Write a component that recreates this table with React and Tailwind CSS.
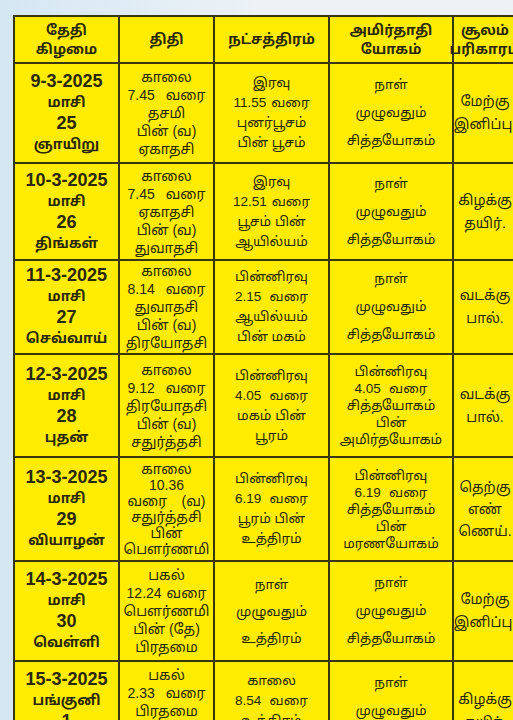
const rows = [
  {
    h: 100,
    date: ['9-3-2025', 'மாசி', '25', 'ஞாயிறு'],
    thithi: ['காலை', '7.45 வரை', 'தசமி', 'பின் (வ)', 'ஏகாதசி'],
    star: ['இரவு', '11.55 வரை', 'புனர்பூசம்', 'பின் பூசம்'],
    yogam: ['நாள்', 'முழுவதும்', 'சித்தயோகம்'],
    soolam: ['மேற்கு', 'இனிப்பு.'],
  },
  {
    h: 97,
    date: ['10-3-2025', 'மாசி', '26', 'திங்கள்'],
    thithi: ['காலை', '7.45 வரை', 'ஏகாதசி', 'பின் (வ)', 'துவாதசி'],
    star: ['இரவு', '12.51 வரை', 'பூசம் பின்', 'ஆயில்யம்'],
    yogam: ['நாள்', 'முழுவதும்', 'சித்தயோகம்'],
    soolam: ['கிழக்கு', 'தயிர்.'],
  },
  {
    h: 94,
    date: ['11-3-2025', 'மாசி', '27', 'செவ்வாய்'],
    thithi: ['காலை', '8.14 வரை', 'துவாதசி', 'பின் (வ)', 'திரயோதசி'],
    star: ['பின்னிரவு', '2.15 வரை', 'ஆயில்யம்', 'பின் மகம்'],
    yogam: ['நாள்', 'முழுவதும்', 'சித்தயோகம்'],
    soolam: ['வடக்கு', 'பால்.'],
  },
  {
    h: 103,
    date: ['12-3-2025', 'மாசி', '28', 'புதன்'],
    thithi: ['காலை', '9.12 வரை', 'திரயோதசி', 'பின் (வ)', 'சதுர்த்தசி'],
    star: ['பின்னிரவு', '4.05 வரை', 'மகம் பின்', 'பூரம்'],
    yogam: ['பின்னிரவு', '4.05 வரை', 'சித்தயோகம்', 'பின்', 'அமிர்தயோகம்'],
    soolam: ['வடக்கு', 'பால்.'],
  },
  {
    h: 104,
    date: ['13-3-2025', 'மாசி', '29', 'வியாழன்'],
    thithi: ['காலை', '10.36', 'வரை (வ)', 'சதுர்த்தசி', 'பின்', 'பௌர்ணமி'],
    star: ['பின்னிரவு', '6.19 வரை', 'பூரம் பின்', 'உத்திரம்'],
    yogam: ['பின்னிரவு', '6.19 வரை', 'சித்தயோகம்', 'பின்', 'மரணயோகம்'],
    soolam: ['தெற்கு', 'எண்', 'ணெய்.'],
  },
  {
    h: 100,
    date: ['14-3-2025', 'மாசி', '30', 'வெள்ளி'],
    thithi: ['பகல்', '12.24 வரை', 'பௌர்ணமி', 'பின் (தே)', 'பிரதமை'],
    star: ['நாள்', 'முழுவதும்', 'உத்திரம்'],
    yogam: ['நாள்', 'முழுவதும்', 'சித்தயோகம்'],
    soolam: ['மேற்கு', 'இனிப்பு.'],
  },
  {
    h: 100,
    date: ['15-3-2025', 'பங்குனி', '1', 'சனி'],
    thithi: ['பகல்', '2.33 வரை', 'பிரதமை', 'பின் (வ)', 'துவிதியை'],
    star: ['காலை', '8.54 வரை', 'உத்திரம்', 'பின் அஸ்தம்'],
    yogam: ['நாள்', 'முழுவதும்', 'சித்தயோகம்'],
    soolam: ['கிழக்கு', 'தயிர்.'],
  },
];

const font = { fontFamily: '"Liberation Sans", "Noto Sans", "Noto Sans Tamil", sans-serif' };
const cols = 'grid grid-cols-[105px_95px_115px_124px_64px]';

// spread = min width for lines that are justified across the cell (the "X வரை" lines)
function Cell({ lines, className = '', spread = null, lineClass = null }) {
  return (
    <div
      className={`flex flex-col items-center justify-center border-r-2 border-b-2 border-[#3b3612] text-center whitespace-nowrap ${className}`}
    >
      {lines.map((l, i) => {
        const extra = lineClass ? lineClass(l, i) : '';
        if (spread && l.includes('வரை') && l.includes(' ')) {
          const cut = l.indexOf(' ');
          return (
            <span key={i} className={`flex justify-between gap-x-[5px] ${spread} ${extra}`}>
              <span>{l.slice(0, cut)}</span>
              <span>{l.slice(cut + 1)}</span>
            </span>
          );
        }
        return (
          <span key={i} className={extra}>
            {l}
          </span>
        );
      })}
    </div>
  );
}

export default function App() {
  return (
    <div
      className="w-[513px] h-[720px] overflow-hidden bg-gradient-to-r from-[#d5e7f4] via-[#ecf2f6] to-[#edf2f5] pt-[15px] pl-[13px]"
      style={font}
    >
      <div className="w-[520px] border-l-2 border-t-2 border-[#3b3612] bg-[#ffec00] text-[#2c2806]">
        <div className={`${cols} h-[47px] text-[14px] leading-[19px] font-bold`}>
          <Cell lines={['தேதி', 'கிழமை']} />
          <Cell lines={['திதி']} />
          <Cell lines={['நட்சத்திரம்']} />
          <Cell lines={['அமிர்தாதி', 'யோகம்']} />
          <Cell lines={['சூலம்', 'பரிகாரம்']} />
        </div>
        {rows.map((r, i) => (
          <div key={i} className={cols} style={{ height: r.h }}>
            <Cell
              lines={r.date}
              className="font-bold leading-[21px] text-[14px]"
              lineClass={(l, j) => (j === 0 || j === 2 ? 'text-[18px]' : '')}
            />
            <Cell
              lines={r.thithi}
              spread="min-w-[78px]"
              className={`text-[14px] ${r.thithi.length > 5 ? 'leading-[16px]' : 'leading-[18px]'}`}
            />
            <Cell
              lines={r.star}
              spread="min-w-[73px]"
              className={`text-[13.5px] ${r.star.length > 3 ? 'leading-[20px]' : 'leading-[27px]'}`}
            />
            <Cell
              lines={r.yogam}
              spread="min-w-[73px]"
              className={`text-[13.5px] ${r.yogam.length > 3 ? 'leading-[17px]' : 'leading-[28px]'}`}
            />
            <Cell
              lines={r.soolam}
              className={`text-[14px] ${r.soolam.length > 2 ? 'leading-[22px]' : 'leading-[23px]'}`}
            />
          </div>
        ))}
      </div>
    </div>
  );
}
